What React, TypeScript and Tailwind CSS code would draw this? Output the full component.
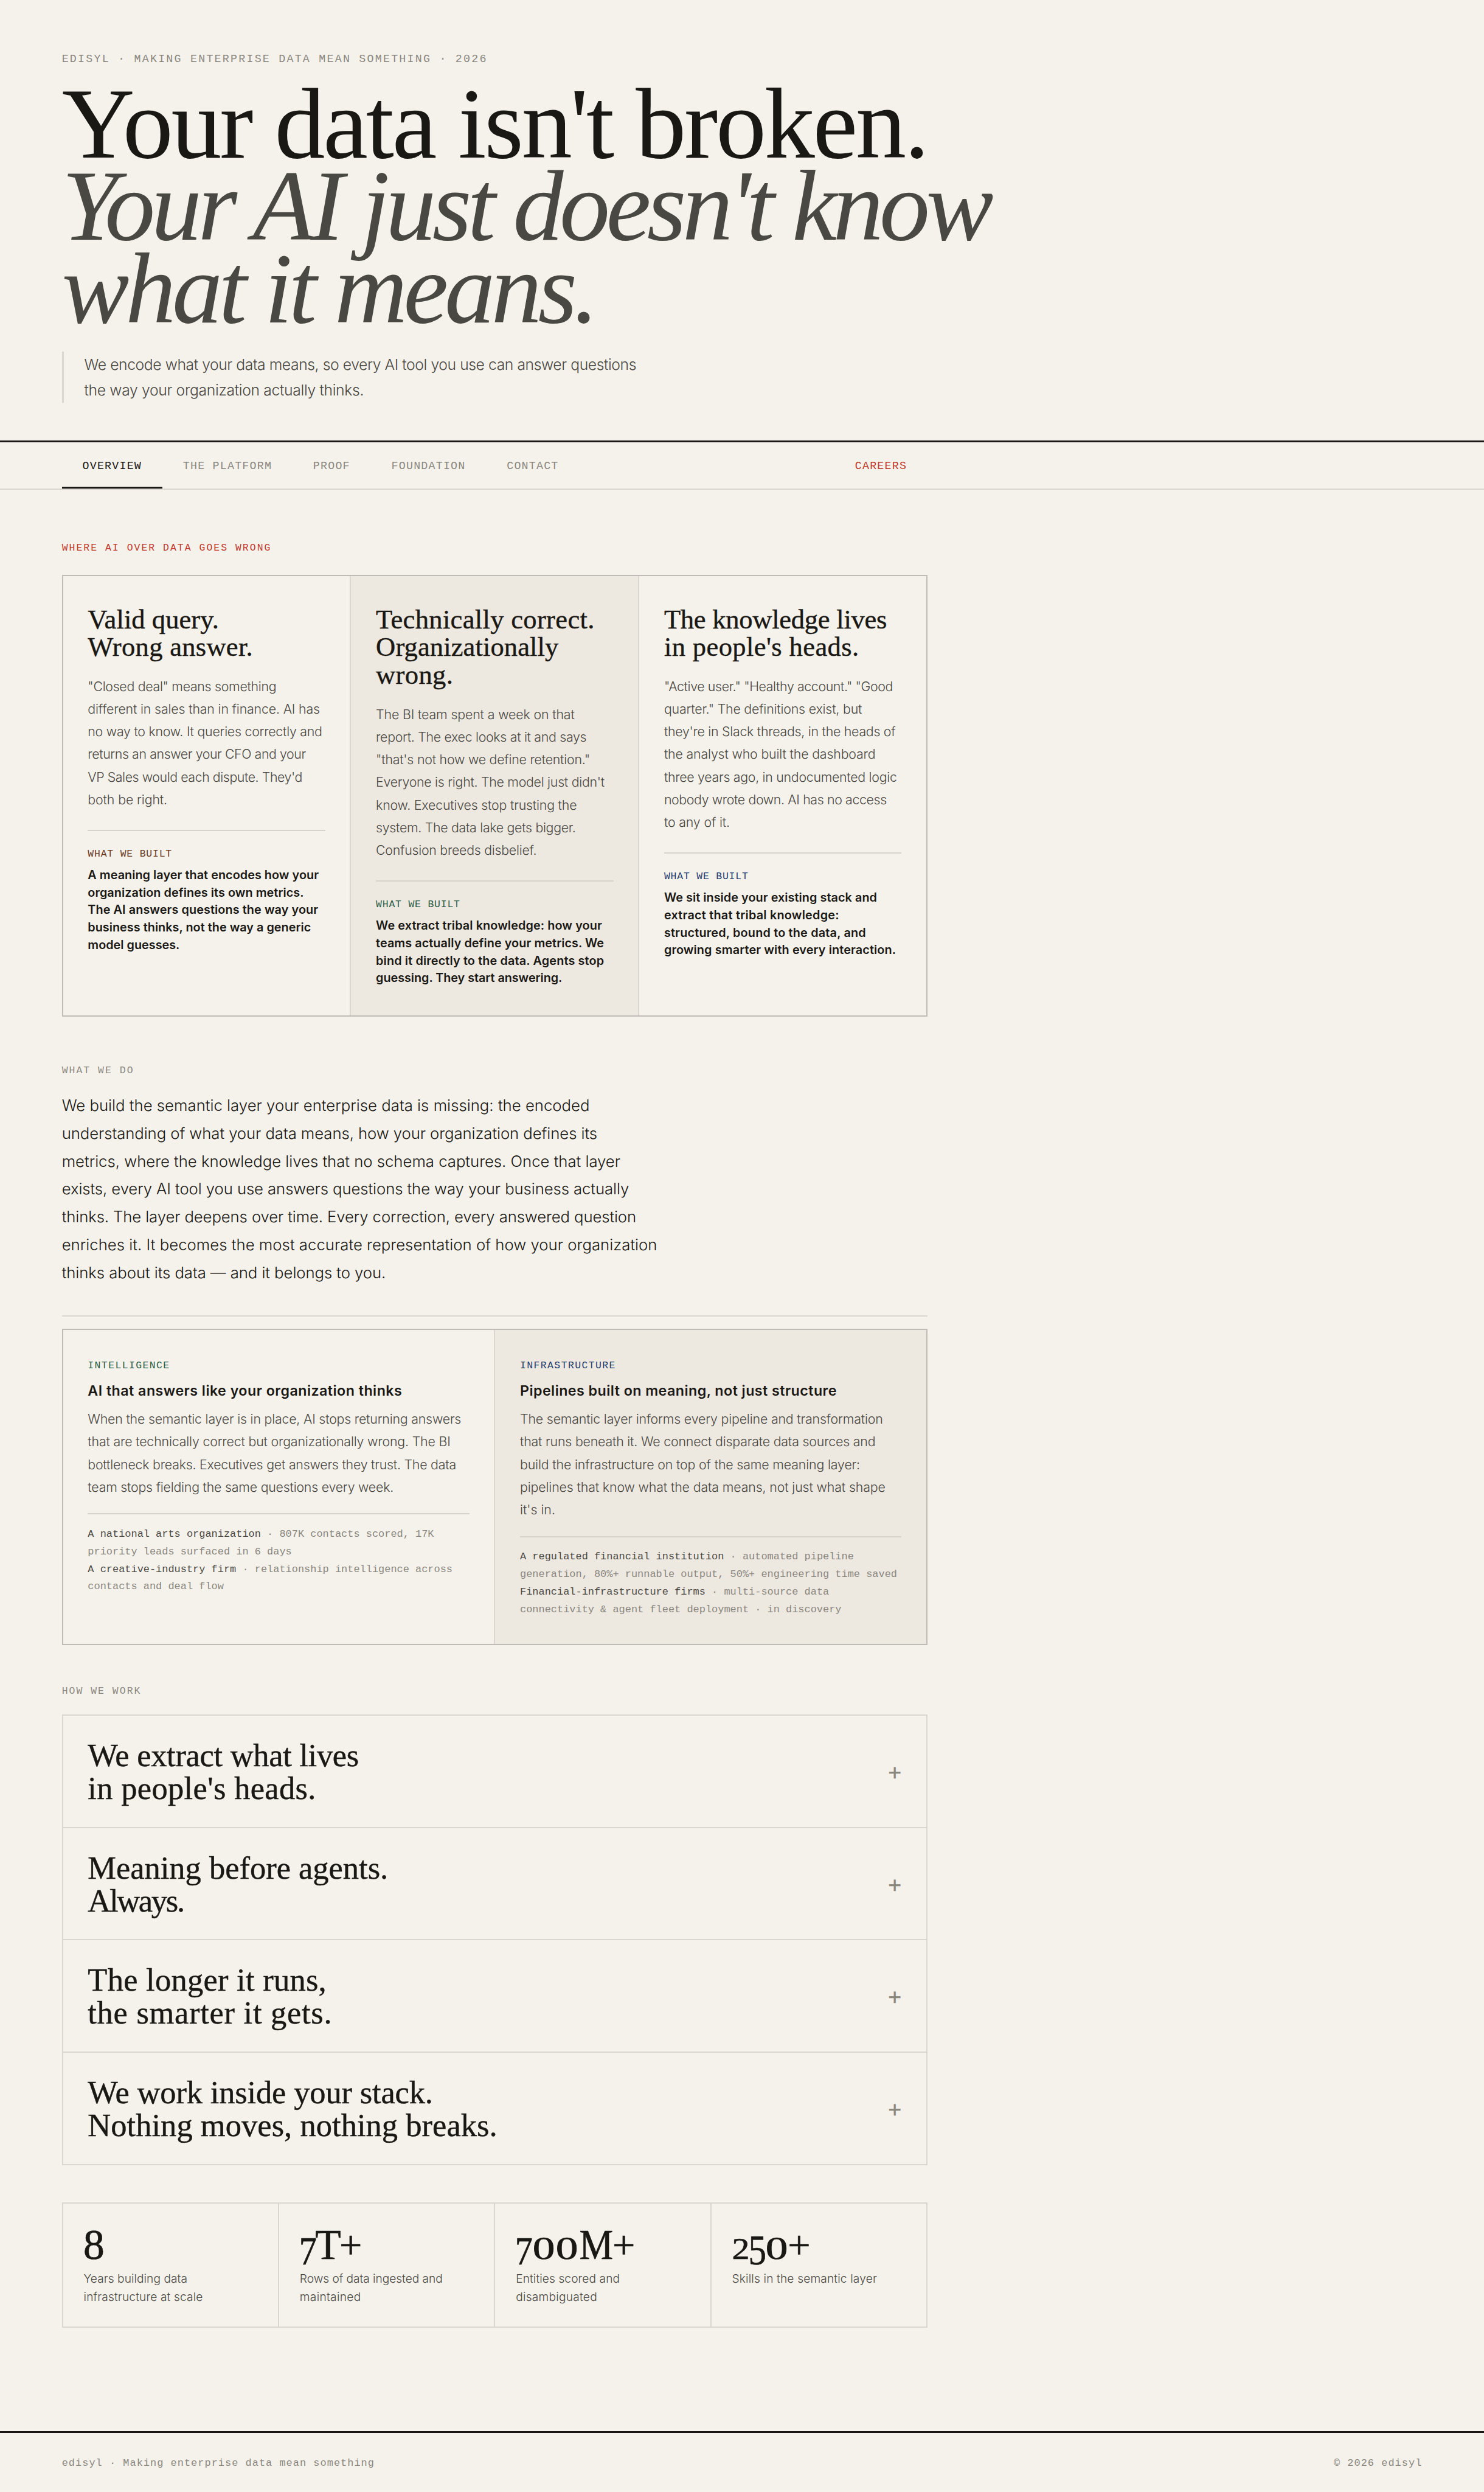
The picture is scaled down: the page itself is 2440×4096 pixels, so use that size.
import { useLayoutEffect, useRef } from 'react'
import type { ReactNode } from 'react'

type Line = [text: string, width: number]

/** One line of copy, tracked so that it sets to the given measure. */
function FitLine({ text, width }: { text: string; width: number }) {
  const ref = useRef<HTMLSpanElement>(null)

  useLayoutEffect(() => {
    const el = ref.current
    if (!el || !el.parentElement) return
    el.style.letterSpacing = '0px'
    const ratio = el.parentElement.getBoundingClientRect().width / width
    const natural = el.getBoundingClientRect().width / ratio
    el.style.letterSpacing = `${(width - natural) / (text.length - 1)}px`
  }, [text, width])

  return (
    <span className="block whitespace-nowrap" style={{ width }}>
      <span ref={ref} className="inline-block align-top">
        {text}
      </span>
    </span>
  )
}

function Lines({ lines }: { lines: Line[] }) {
  return (
    <>
      {lines.map(([text, width]) => (
        <FitLine key={text} text={text} width={width} />
      ))}
    </>
  )
}

const SERIF = "font-['Liberation_Serif',serif]"
const MONO = "font-['Liberation_Mono',monospace]"

function SectionLabel({ className, children }: { className: string; children: ReactNode }) {
  return (
    <div className={`${MONO} h-[14px] text-[9.7px] leading-[14px] tracking-[1.2px] uppercase ${className}`}>
      {children}
    </div>
  )
}

const tabs = ['Overview', 'The Platform', 'Proof', 'Foundation', 'Contact']

const problems: { title: Line[]; body: Line[]; built: Line[]; tone: string }[] = [
  {
    title: [
      ['Valid query.', 127.2],
      ['Wrong answer.', 160.2],
    ],
    body: [
      ['"Closed deal" means something', 183.1],
      ['different in sales than in finance. AI has', 225.3],
      ['no way to know. It queries correctly and', 227.6],
      ['returns an answer your CFO and your', 211.8],
      ["VP Sales would each dispute. They'd", 208.4],
      ['both be right.', 77.2],
    ],
    built: [
      ['A meaning layer that encodes how your', 224.1],
      ['organization defines its own metrics.', 209.7],
      ['The AI answers questions the way your', 223.6],
      ['business thinks, not the way a generic', 216.6],
      ['model guesses.', 89.2],
    ],
    tone: 'text-[#6b3a1f]',
  },
  {
    title: [
      ['Technically correct.', 212],
      ['Organizationally', 177.2],
      ['wrong.', 74.8],
    ],
    body: [
      ['The BI team spent a week on that', 192.8],
      ['report. The exec looks at it and says', 204.5],
      ['"that\'s not how we define retention."', 207.8],
      ["Everyone is right. The model just didn't", 221.9],
      ['know. Executives stop trusting the', 195],
      ['system. The data lake gets bigger.', 194],
      ['Confusion breeds disbelief.', 156],
    ],
    built: [
      ['We extract tribal knowledge: how your', 219.4],
      ['teams actually define your metrics. We', 221.3],
      ['bind it directly to the data. Agents stop', 221.3],
      ['guessing. They start answering.', 180.8],
    ],
    tone: 'text-[#2a5c45]',
  },
  {
    title: [
      ['The knowledge lives', 216.3],
      ["in people's heads.", 189],
    ],
    body: [
      ['"Active user." "Healthy account." "Good', 222.2],
      ['quarter." The definitions exist, but', 192.1],
      ["they're in Slack threads, in the heads of", 224.7],
      ['the analyst who built the dashboard', 205.2],
      ['three years ago, in undocumented logic', 226],
      ['nobody wrote down. AI has no access', 216.2],
      ['to any of it.', 63.8],
    ],
    built: [
      ['We sit inside your existing stack and', 206.6],
      ['extract that tribal knowledge:', 169.8],
      ['structured, bound to the data, and', 195.8],
      ['growing smarter with every interaction.', 225],
    ],
    tone: 'text-[#1f3a6e]',
  },
]

const intro: Line[] = [
  ['We build the semantic layer your enterprise data is missing: the encoded', 512.2],
  ['understanding of what your data means, how your organization defines its', 519.6],
  ['metrics, where the knowledge lives that no schema captures. Once that layer', 542],
  ['exists, every AI tool you use answers questions the way your business actually', 550.4],
  ['thinks. The layer deepens over time. Every correction, every answered question', 557.4],
  ['enriches it. It becomes the most accurate representation of how your organization', 577.7],
  ['thinks about its data — and it belongs to you.', 314.4],
]

const offers: { label: string; tone: string; title: Line; body: Line[]; clients: [string, string][] }[] = [
  {
    label: 'Intelligence',
    tone: 'text-[#2a5c45]',
    title: ['AI that answers like your organization thinks', 304.8],
    body: [
      ['When the semantic layer is in place, AI stops returning answers', 362.4],
      ['that are technically correct but organizationally wrong. The BI', 352],
      ['bottleneck breaks. Executives get answers they trust. The data', 357.6],
      ['team stops fielding the same questions every week.', 296.8],
    ],
    clients: [
      ['A national arts organization', '807K contacts scored, 17K priority leads surfaced in 6 days'],
      ['A creative-industry firm', 'relationship intelligence across contacts and deal flow'],
    ],
  },
  {
    label: 'Infrastructure',
    tone: 'text-[#1f3a6e]',
    title: ['Pipelines built on meaning, not just structure', 307.2],
    body: [
      ['The semantic layer informs every pipeline and transformation', 352.2],
      ['that runs beneath it. We connect disparate data sources and', 345],
      ['build the infrastructure on top of the same meaning layer:', 330],
      ['pipelines that know what the data means, not just what shape', 354.6],
      ["it's in.", 34.2],
    ],
    clients: [
      [
        'A regulated financial institution',
        'automated pipeline generation, 80%+ runnable output, 50%+ engineering time saved',
      ],
      [
        'Financial-infrastructure firms',
        'multi-source data connectivity & agent fleet deployment · in discovery',
      ],
    ],
  },
]

const principles: Line[][] = [
  [
    ['We extract what lives', 263.2],
    ["in people's heads.", 221.4],
  ],
  [
    ['Meaning before agents.', 291.5],
    ['Always.', 94.3],
  ],
  [
    ['The longer it runs,', 231.6],
    ['the smarter it gets.', 236.8],
  ],
  [
    ['We work inside your stack.', 335],
    ['Nothing moves, nothing breaks.', 397.4],
  ],
]

// old-style figures: 0 and 2 sit at x-height, 5 and 7 hang below the baseline
const glyphs: Record<string, string> = {
  '0': 'w-[22.6px] text-[31px] scale-x-[1.4]',
  '2': 'w-[16.6px] text-[30.5px] scale-x-[1.12]',
  '5': 'w-[15.8px] text-[41px] scale-x-[0.85] translate-y-[5.5px]',
  '7': 'w-[15.8px] text-[39px] scale-x-[0.88] translate-y-[5.5px]',
  '8': 'w-[20px] text-[41px]',
  T: 'w-[23.5px] text-[41px]',
  M: 'w-[33.5px] text-[41px] scale-x-[0.9]',
  '+': 'w-[20.4px] text-[39px] -translate-y-[0.6px]',
}

const stats: { value: string; label: Line[] }[] = [
  {
    value: '8',
    label: [
      ['Years building data', 100.6],
      ['infrastructure at scale', 115.6],
    ],
  },
  {
    value: '7T+',
    label: [
      ['Rows of data ingested and', 138.6],
      ['maintained', 59.2],
    ],
  },
  {
    value: '700M+',
    label: [
      ['Entities scored and', 100.8],
      ['disambiguated', 78.8],
    ],
  },
  { value: '250+', label: [['Skills in the semantic layer', 140.6]] },
]

function Header() {
  return (
    <header className="h-[429px] border-b-2 border-[#1a1814] px-[60px] pt-[49.3px]">
      <div className={`${MONO} text-[10.8px] leading-[16px] tracking-[1.32px] text-[#8a877f] uppercase`}>
        edisyl · Making enterprise data mean something · 2026
      </div>
      <h1 className={`${SERIF} mt-[15.1px] text-[98px] leading-[79.8px] text-[#1a1814]`}>
        <FitLine text="Your data isn't broken." width={842} />
        <em className="text-[#4a4843]">
          <Lines
            lines={[
              ["Your AI just doesn't know", 904],
              ['what it means.', 521],
            ]}
          />
        </em>
      </h1>
      <p className="mt-[21.4px] border-l-2 border-[#dad7d0] pl-[20px] text-[14.6px] leading-[24.8px] font-light text-[#4a4843]">
        <Lines
          lines={[
            ['We encode what your data means, so every AI tool you use can answer questions', 535.8],
            ['the way your organization actually thinks.', 271.4],
          ]}
        />
      </p>
    </header>
  )
}

function Nav() {
  return (
    <nav className="h-[46px] border-b-[1.2px] border-[#dad7d0] px-[60px]">
      <div className={`${MONO} flex h-[45px] w-[840px] text-[10.8px] leading-[16px] tracking-[0.72px] uppercase`}>
        {tabs.map((tab, i) => (
          <a
            key={tab}
            className={
              i === 0
                ? 'border-b-2 border-[#1a1814] px-[20px] pt-[15.2px] text-[#1a1814]'
                : 'px-[20px] pt-[15.2px] text-[#8a877f]'
            }
          >
            {tab}
          </a>
        ))}
        <a className="ml-auto px-[20px] pt-[15.2px] text-[#c0392b]">Careers</a>
      </div>
    </nav>
  )
}

function Problems() {
  return (
    <section className="mt-[19.3px] grid h-[428px] grid-cols-3 gap-x-[1.2px] border-[1.2px] border-[#bfbcb5] bg-[#dad7d0]">
      {problems.map(({ title, body, built, tone }, i) => (
        <article key={tone} className={`px-[24px] pt-[28.4px] ${i === 1 ? 'bg-[#ede8e0]' : 'bg-[#f5f2eb]'}`}>
          <h2
            className={`${SERIF} text-[26.3px] leading-[27.1px] text-[#1a1814] [-webkit-text-stroke:0.25px_#1a1814]`}
          >
            <Lines lines={title} />
          </h2>
          <p className="mt-[13.1px] text-[12.6px] leading-[22px] font-light text-[#4a4843]">
            <Lines lines={body} />
          </p>
          <div className="mt-[18px] border-t-[1.2px] border-[#d6d3cc] pt-[15.4px]">
            <div className={`${MONO} text-[9.7px] leading-[14px] tracking-[0.48px] uppercase ${tone}`}>
              What we built
            </div>
            <p className="mt-[4.8px] text-[11.7px] leading-[17px] font-semibold text-[#1a1814]">
              <Lines lines={built} />
            </p>
          </div>
        </article>
      ))}
    </section>
  )
}

function Offers() {
  return (
    <section className="mt-[12px] grid h-[307px] grid-cols-2 gap-x-[1.2px] border-[1.2px] border-[#bfbcb5] bg-[#dad7d0]">
      {offers.map(({ label, tone, title, body, clients }, i) => (
        <article key={label} className={`px-[24px] pt-[27.4px] ${i === 0 ? 'bg-[#f5f2eb]' : 'bg-[#ede8e0]'}`}>
          <div className={`${MONO} text-[9.7px] leading-[14px] tracking-[0.84px] uppercase ${tone}`}>{label}</div>
          <h3 className="mt-[8.4px] text-[13.7px] leading-[18px] font-semibold text-[#1a1814]">
            <Lines lines={[title]} />
          </h3>
          <p className="mt-[7.6px] text-[12.6px] leading-[22px] font-light text-[#4a4843]">
            <Lines lines={body} />
          </p>
          <div
            className={`${MONO} mt-[14.3px] border-t-[1.2px] border-[#d6d3cc] pt-[11px] text-[10px] leading-[17px] text-[#8a877f]`}
          >
            {clients.map(([name, result]) => (
              <p key={name}>
                <span className="text-[#4a4843]">{name}</span> · {result}
              </p>
            ))}
          </div>
        </article>
      ))}
    </section>
  )
}

function Principles() {
  return (
    <section className="mt-[15.3px] border-x-[1.2px] border-t-[1.2px] border-[#dad7d0]">
      {principles.map((lines) => (
        <div
          key={lines[0][0]}
          className="flex h-[109px] justify-between border-b-[1.2px] border-[#dad7d0] px-[24px] pt-[22.4px]"
        >
          <h3 className={`${SERIF} text-[31px] leading-[32px] text-[#1a1814] [-webkit-text-stroke:0.25px_#1a1814]`}>
            <Lines lines={lines} />
          </h3>
          <span
            className={`${MONO} mt-[23.6px] text-[22px] leading-[22px] text-[#8a877f] [-webkit-text-stroke:0.3px_#8a877f]`}
          >
            +
          </span>
        </div>
      ))}
    </section>
  )
}

function Stats() {
  return (
    <section className="mt-[36px] grid h-[122px] grid-cols-4 gap-x-[1.2px] border-[1.2px] border-[#dad7d0] bg-[#dad7d0]">
      {stats.map(({ value, label }) => (
        <div key={value} className="bg-[#f5f2eb] px-[20px] pt-[19.5px]">
          <div
            className={`${SERIF} flex h-[41px] items-baseline leading-[41px] text-[#1a1814] [-webkit-text-stroke:0.4px_#1a1814]`}
          >
            {value.split('').map((char, n) => (
              <span key={n} className={`flex justify-center ${glyphs[char]}`}>
                {char}
              </span>
            ))}
          </div>
          <p className="mt-[3.4px] text-[11.3px] leading-[18px] font-light text-[#4a4843]">
            <Lines lines={label} />
          </p>
        </div>
      ))}
    </section>
  )
}

export default function App() {
  return (
    <div className="h-[2417.3px] w-[1440px] overflow-hidden bg-[#f5f2eb] font-['Inter',sans-serif] [zoom:1.69444]">
      <Header />
      <Nav />
      <main className="ml-[60px] w-[840px]">
        <SectionLabel className="box-content pt-[49.7px] text-[#c0392b]">Where AI over data goes wrong</SectionLabel>
        <Problems />
        <SectionLabel className="mt-[45.6px] text-[#8a877f]">What we do</SectionLabel>
        <p className="mt-[13.3px] text-[15.2px] leading-[27px] font-light text-[#1a1814]">
          <Lines lines={intro} />
        </p>
        <hr className="mt-[28px] border-t-[1.2px] border-[#dad7d0]" />
        <Offers />
        <SectionLabel className="mt-[37.7px] text-[#8a877f]">How we work</SectionLabel>
        <Principles />
        <Stats />
      </main>
      <footer
        className={`${MONO} mt-[100px] flex justify-between border-t-2 border-[#1a1814] px-[60px] pt-[21.5px] text-[10px] leading-[16px] tracking-[0.06em] text-[#8a877f]`}
      >
        <span>edisyl · Making enterprise data mean something</span>
        <span>© 2026 edisyl</span>
      </footer>
    </div>
  )
}
